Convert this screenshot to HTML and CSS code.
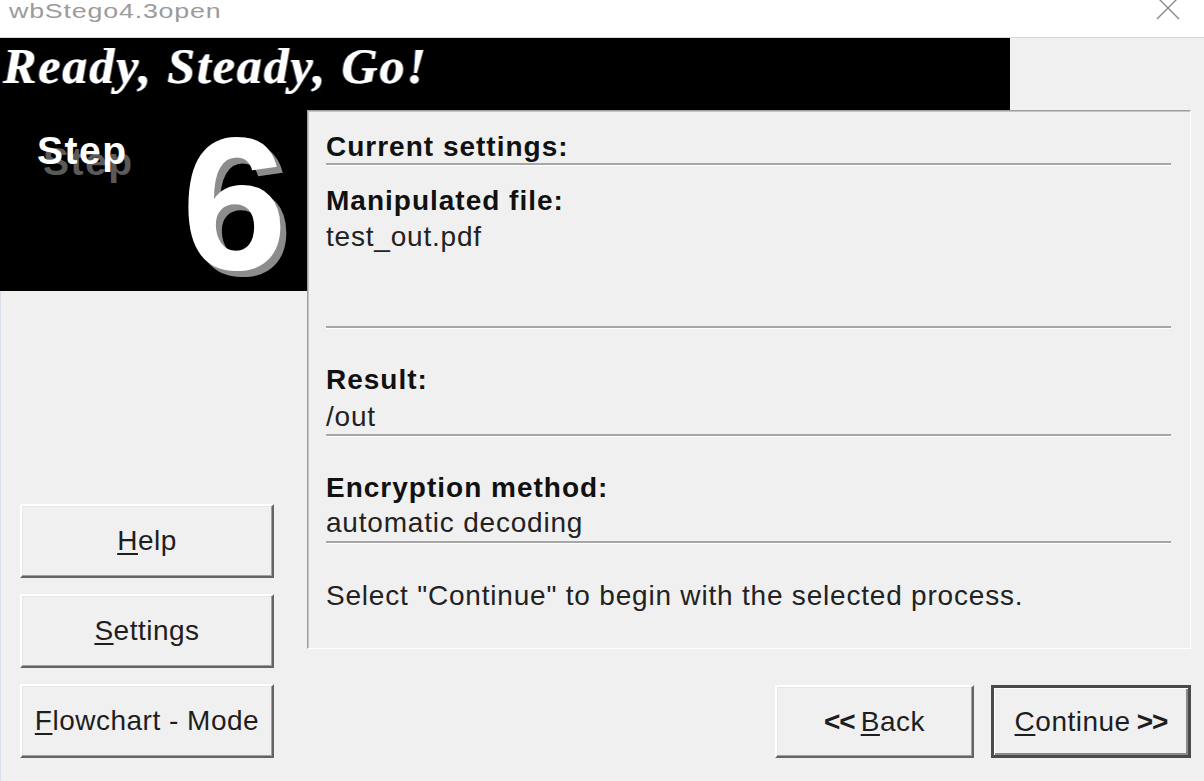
FILE: index.html
```html
<!DOCTYPE html>
<html lang="en">
<head>
<meta charset="utf-8">
<title>wbStego4.3open</title>
<link rel="stylesheet" href="styles.css">
</head>
<body>
<div class="titlebar">
  <span class="title">wbStego4.3open</span>
  <svg class="close" width="26" height="26" viewBox="0 0 26 26"><path d="M2 2 L24 24 M24 2 L2 24" stroke="#8a8a8a" stroke-width="1.4" fill="none"/></svg>
</div>
<div class="window">
  <div class="banner"><h1 class="headline">Ready, Steady, Go!</h1></div>
  <div class="main">
    <div class="side">
      <div class="stepbox">
        <span class="step">Step</span>
        <span class="num">6</span>
      </div>
      <div class="side-buttons">
        <button class="btn"><u>H</u>elp</button>
        <button class="btn"><u>S</u>ettings</button>
        <button class="btn"><u>F</u>lowchart - Mode</button>
      </div>
    </div>
    <div class="content">
      <div class="panel">
        <div class="label first">Current settings:</div>
        <div class="sep s1"></div>
        <div class="label g1">Manipulated file:</div>
        <div class="value v1">test_out.pdf</div>
        <div class="sep s2"></div>
        <div class="label g2">Result:</div>
        <div class="value v2">/out</div>
        <div class="sep s3"></div>
        <div class="label g3">Encryption method:</div>
        <div class="value v3">automatic decoding</div>
        <div class="sep s4"></div>
        <div class="value note">Select "Continue" to begin with the selected process.</div>
      </div>
      <div class="nav">
        <button class="btn nav-btn"><b class="chev">&lt;&lt;</b> <u>B</u>ack</button>
        <button class="btn nav-btn default"><u>C</u>ontinue <b class="chev">&gt;&gt;</b></button>
      </div>
    </div>
  </div>
</div>
</body>
</html>
```
FILE: styles.css
```css
* { box-sizing: border-box; }
html, body {
  margin: 0;
  padding: 0;
  width: 1204px;
  height: 781px;
  overflow: hidden;
  background: #f0f0f0;
  font-family: "Liberation Sans", Arial, sans-serif;
}

.titlebar {
  height: 38px;
  background: #fff;
  border-bottom: 1px solid #cfd8e3;
  display: flex;
  align-items: flex-start;
  justify-content: space-between;
}
.title {
  font-family: "Liberation Sans", Arial, sans-serif;
  font-size: 20px;
  line-height: 23px;
  color: #9b9b9b;
  margin-left: 9px;
  letter-spacing: 0.6px;
  transform: scaleX(1.34);
  transform-origin: left center;
}
.close {
  margin-top: -5px;
  margin-right: 23px;
}

.window {
  height: 743px;
  display: flex;
  flex-direction: column;
  border-left: 1px solid #d9dfe7;
}

.banner {
  height: 72px;
  width: 1010px;
  margin-left: -1px;
  background: #000;
  padding-top: 3px;
  padding-left: 3px;
}
.headline {
  margin: 0;
  font-family: "Liberation Serif", "Times New Roman", serif;
  font-weight: bold;
  font-style: italic;
  font-size: 50px;
  line-height: 1;
  letter-spacing: 1.9px;
  color: #fff;
  text-shadow: -1px 0 0 rgba(120,170,255,0.6), 1px 0 0 rgba(255,200,120,0.5);
}

.main {
  flex: 1;
  display: flex;
}
.side {
  width: 307px;
  margin-left: -1px;
  display: flex;
  flex-direction: column;
}
.stepbox {
  height: 181px;
  width: 307px;
  background: #000;
  display: flex;
  align-items: flex-start;
  padding-left: 37px;
}
.step {
  font-family: "Liberation Sans", Arial, sans-serif;
  font-weight: bold;
  font-size: 39px;
  line-height: 1;
  letter-spacing: 1.5px;
  color: #fff;
  margin-top: 21px;
  text-shadow: 6px 11px 0 #5a5a5a;
}
.num {
  font-family: "Liberation Sans", Arial, sans-serif;
  font-weight: bold;
  font-size: 190px;
  line-height: 150px;
  color: #fff;
  margin-top: 18px;
  margin-left: 54px;
  text-shadow: 6px 6px 0 #8c8c8c;
}

.side-buttons {
  margin-top: auto;
  display: flex;
  flex-direction: column;
  gap: 16px;
  padding: 0 0 23px 20px;
}

.btn {
  width: 254px;
  height: 74px;
  background: #f0f0f0;
  border: 2px solid;
  border-color: #ffffff #646464 #646464 #ffffff;
  box-shadow: inset -1px -1px 0 #a0a0a0, inset 1px 1px 0 #e6e6e6;
  font-family: "Liberation Sans", Arial, sans-serif;
  font-size: 28px;
  letter-spacing: 0.5px;
  color: #1e1e1e;
  padding: 0;
  display: flex;
  align-items: center;
  justify-content: center;
}
.btn u { text-underline-offset: 3px; text-decoration-thickness: 2px; }

.content {
  flex: 1;
  display: flex;
  flex-direction: column;
}
.panel {
  width: 884px;
  height: 539px;
  border: 1px solid;
  border-color: #9e9e9e #ffffff #ffffff #9e9e9e;
  box-shadow: inset 1px 1px 0 #c4c4c4;
  padding: 20px 19px 0 18px;
  display: flex;
  flex-direction: column;
}
.label {
  font-weight: bold;
  font-size: 28px;
  line-height: 32px;
  letter-spacing: 1px;
  color: #111;
}
.value {
  font-size: 28px;
  line-height: 32px;
  letter-spacing: 0.8px;
  color: #222;
}
.sep {
  height: 3px;
  border-top: 2px solid #a6a6a6;
  border-bottom: 1px solid #ffffff;
  flex-shrink: 0;
}
.s1 { margin-top: 0; }
.g1 { margin-top: 19px; }
.v1 { margin-top: 4px; }
.s2 { margin-top: 73px; }
.g2 { margin-top: 35px; }
.v2 { margin-top: 5px; }
.s3 { margin-top: 1px; }
.g3 { margin-top: 35px; }
.v3 { margin-top: 3px; }
.s4 { margin-top: 2px; }
.note { margin-top: 36px; }

.nav {
  margin-top: 36px;
  display: flex;
  justify-content: flex-end;
  gap: 17px;
  padding-right: 13px;
}
.nav-btn {
  width: 199px;
  height: 73px;
}
.nav-btn.default {
  width: 200px;
  border: 3px solid #4a4a4a;
  box-shadow: inset 1px 1px 0 #ffffff, inset -2px -2px 0 #8a8a8a;
}
.chev {
  font-weight: bold;
  letter-spacing: -1px;
  margin: 0 6px 0 0;
}
.default .chev { margin: 0 0 0 6px; }
```
